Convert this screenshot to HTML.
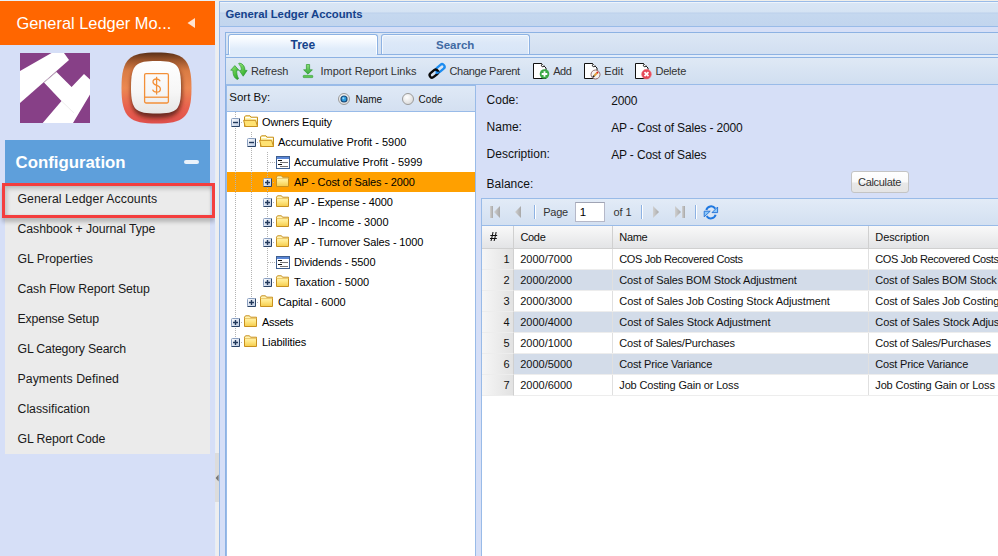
<!DOCTYPE html>
<html><head><meta charset="utf-8">
<style>
*{margin:0;padding:0;box-sizing:border-box}
html,body{width:998px;height:556px;overflow:hidden;background:#D6DFF7;font-family:"Liberation Sans",sans-serif}
body{position:relative}
.a{position:absolute}
.t{position:absolute;white-space:nowrap;line-height:1}
svg{position:absolute;overflow:visible}
</style></head><body>
<div class="a" style="left:0px;top:1px;width:215px;height:44px;background:#FF6600"></div>
<div class="t" style="left:16.4px;top:15.12px;font-size:16.4px;color:#fff">General Ledger Mo...</div>
<svg style="left:0;top:0" width="215" height="45"><path d="M187.5 23 L195 18 L195 28 Z" fill="#FFE3D0"/></svg>
<svg style="left:20px;top:53px" width="70" height="70" viewBox="0 0 70 70">
<rect width="70" height="70" fill="#874087"/>
<path d="M31.5 0 L44 0 L49 7 L0 50 L0 18 Z" fill="#fff"/>
<path d="M36.5 19 L51.6 34 L64 21 L70 26.5 L70 41.5 L53 70 L22.7 70 L41.5 48 L24 29.6 Z" fill="#fff"/>
<path d="M24 29.6 L36.5 19" stroke="#ccc" stroke-width="0.8"/>
<path d="M41.5 48 L54 60" stroke="#e0e0e0" stroke-width="0.6"/>
</svg>
<svg style="left:120px;top:51px" width="73" height="75" viewBox="0 0 73 75">
<defs>
<linearGradient id="og" x1="0" y1="0" x2="0" y2="1">
<stop offset="0" stop-color="#5A3018"/><stop offset="0.1" stop-color="#96522A"/><stop offset="0.26" stop-color="#DA7C44"/><stop offset="0.5" stop-color="#EC8852"/><stop offset="0.78" stop-color="#E8604E"/><stop offset="1" stop-color="#E0504C"/>
</linearGradient>
<linearGradient id="wg" x1="0" y1="0" x2="0" y2="1">
<stop offset="0" stop-color="#FFFFFF"/><stop offset="0.6" stop-color="#F6F6F6"/><stop offset="1" stop-color="#E6E6E6"/>
</linearGradient>
<filter id="sh" x="-30%" y="-30%" width="160%" height="160%"><feGaussianBlur stdDeviation="2"/></filter>
</defs>
<path d="M36.5 1.5 C63 1.5 71.5 7 71.5 37 C71.5 67 63 72.5 36.5 72.5 C10 72.5 1.5 67 1.5 37 C1.5 7 10 1.5 36.5 1.5 Z" fill="url(#og)"/>
<path d="M36.5 13 C57 13 62 17 62 39.5 C62 62 57 67 36.5 67 C16 67 11 62 11 39.5 C11 17 16 13 36.5 13 Z" fill="#3A1208" opacity="0.7" filter="url(#sh)"/>
<path d="M36.5 10 C57 10 61 13 61 36.5 C61 59.5 57 62.5 36.5 62.5 C16 62.5 11 59.5 11 36.5 C11 13 16 10 36.5 10 Z" fill="url(#wg)"/>
<g fill="none" stroke="#F39038" stroke-width="1.3">
<path d="M26 22.6 H47 Q48.4 22.6 48.4 24 V50.6 Q48.4 52 47 52 H26 Q24.6 52 24.6 50.6 V24 Q24.6 22.6 26 22.6 Z"/>
<path d="M24.6 46.2 H48.4"/>
<path d="M40.2 30.2 C39.5 28.6 38.4 28 36.6 28 C34.4 28 33 29.3 33 31 C33 33 34.6 33.7 36.6 34.3 C38.8 35 40.4 35.8 40.4 38 C40.4 40 38.8 41.2 36.6 41.2 C34.6 41.2 33.2 40.4 32.6 38.6"/>
<path d="M36.6 25.8 V43.6"/>
</g>
</svg>
<div class="a" style="left:5px;top:140px;width:205px;height:43px;background:#5E9FDB"></div>
<div class="t" style="left:15.6px;top:154.58px;font-size:16.8px;color:#fff;font-weight:bold">Configuration</div>
<div class="a" style="left:184px;top:160px;width:15px;height:4px;background:#EAF2FB;border-radius:2px"></div>
<div class="a" style="left:5px;top:183px;width:205px;height:271px;background:#EBEBEB"></div>
<div class="a" style="left:2px;top:183px;width:213px;height:35px;border:3px solid #F43E3E;box-shadow:inset 2px 3px 4px rgba(0,0,0,0.18),inset -2px 0 3px rgba(0,0,0,0.08),0 4px 4px rgba(0,0,0,0.22)"></div>
<div class="t" style="left:17.5px;top:193.19px;font-size:12.3px;color:#1a1a1a;letter-spacing:0.04px">General Ledger Accounts</div>
<div class="t" style="left:17.5px;top:223.19px;font-size:12.3px;color:#1a1a1a;letter-spacing:-0.08px">Cashbook + Journal Type</div>
<div class="t" style="left:17.5px;top:253.19px;font-size:12.3px;color:#1a1a1a;letter-spacing:0px">GL Properties</div>
<div class="t" style="left:17.5px;top:283.19px;font-size:12.3px;color:#1a1a1a;letter-spacing:-0.08px">Cash Flow Report Setup</div>
<div class="t" style="left:17.5px;top:313.19px;font-size:12.3px;color:#1a1a1a;letter-spacing:-0.15px">Expense Setup</div>
<div class="t" style="left:17.5px;top:343.19px;font-size:12.3px;color:#1a1a1a;letter-spacing:-0.18px">GL Category Search</div>
<div class="t" style="left:17.5px;top:373.19px;font-size:12.3px;color:#1a1a1a;letter-spacing:0.06px">Payments Defined</div>
<div class="t" style="left:17.5px;top:403.19px;font-size:12.3px;color:#1a1a1a;letter-spacing:0px">Classification</div>
<div class="t" style="left:17.5px;top:433.19px;font-size:12.3px;color:#1a1a1a;letter-spacing:-0.1px">GL Report Code</div>
<div class="a" style="left:215px;top:1px;width:4px;height:555px;background:#EEEEEE"></div>
<div class="a" style="left:215px;top:1px;width:1px;height:555px;background:#E6EEF8"></div>
<div class="a" style="left:215px;top:453px;width:4px;height:49px;background:#DCDCDC"></div>
<svg style="left:215px;top:470px" width="4" height="16"><path d="M0.6 8 L3.6 4.5 L3.6 11.5 Z" fill="#777"/></svg>
<div class="a" style="left:219px;top:1px;width:779px;height:555px;background:#D6DFF7;border-left:1px solid #99BBE8;border-top:1px solid #99BBE8"></div>
<div class="a" style="left:220px;top:2px;width:778px;height:25px;background:linear-gradient(#D9E6F5 0px,#D5E3F3 10px,#BCD0EB 11px,#C5D8EF 12px,#C2D5EE 24px);border-bottom:1px solid #99BBE8"></div>
<div class="a" style="left:220px;top:2px;width:778px;height:1px;background:#EEF4FB"></div>
<div class="t" style="left:225.5px;top:9.03px;font-size:11.3px;color:#15428B;font-weight:bold">General Ledger Accounts</div>
<div class="a" style="left:225px;top:32px;width:773px;height:524px;border-left:1px solid #8DB2E3;border-top:1px solid #8DB2E3;background:#D6DFF7"></div>
<div class="a" style="left:226px;top:33px;width:772px;height:22px;background:linear-gradient(#DCE7F5,#D2DFF1);border-bottom:1px solid #8DB2E3"></div>
<div class="a" style="left:226px;top:55px;width:772px;height:2px;background:#E2EDFB"></div>
<div class="a" style="left:226px;top:57px;width:772px;height:1px;background:#8DB2E3"></div>
<div class="a" style="left:228px;top:34px;width:150px;height:21px;border:1px solid #8DB2E3;border-bottom:none;border-radius:3px 3px 0 0;background:linear-gradient(#FFFFFF 0px,#F3F8FE 6px,#E0ECFA 14px,#DEEBFA 23px);box-shadow:inset 1px 1px 0 #fff,inset -1px 0 0 #fff"></div>
<div class="a" style="left:381px;top:34px;width:149px;height:20px;border:1px solid #8DB2E3;border-bottom:none;border-radius:3px 3px 0 0;background:linear-gradient(#E6EFFA 0px,#DCE8F8 8px,#D7E5F7 20px);box-shadow:inset 1px 1px 0 #F4F8FD,inset -1px 0 0 #F4F8FD"></div>
<div class="a" style="left:229px;top:54px;width:148px;height:1px;background:#DEEBFA"></div>
<div class="t" style="left:290.5px;top:39.34px;font-size:12px;color:#15428B;font-weight:bold">Tree</div>
<div class="t" style="left:436px;top:39.77px;font-size:11.5px;color:#416AA3;font-weight:bold">Search</div>
<div class="a" style="left:226px;top:58px;width:772px;height:27px;background:linear-gradient(#DFE9F5,#D0DEF0);border-bottom:1px solid #99BBE8"></div>
<div class="t" style="left:251px;top:66.49px;font-size:11px;color:#333;letter-spacing:-0.2px">Refresh</div>
<div class="t" style="left:320.5px;top:66.49px;font-size:11px;color:#333">Import Report Links</div>
<div class="t" style="left:449.4px;top:66.49px;font-size:11px;color:#333;letter-spacing:-0.27px">Change Parent</div>
<div class="t" style="left:553.2px;top:66.49px;font-size:11px;color:#333;letter-spacing:-0.4px">Add</div>
<div class="t" style="left:604.3px;top:66.49px;font-size:11px;color:#333">Edit</div>
<div class="t" style="left:655.4px;top:66.49px;font-size:11px;color:#333;letter-spacing:-0.18px">Delete</div>
<svg style="left:230px;top:62px" width="18" height="18" viewBox="0 0 18 18">
<defs><linearGradient id="gr" x1="0" y1="0" x2="1" y2="1"><stop offset="0" stop-color="#9AE67E"/><stop offset="0.6" stop-color="#4EC040"/><stop offset="1" stop-color="#22982A"/></linearGradient></defs>
<path d="M0.7 8.2 L4.8 3.6 L8.9 8.2 H6.7 C6.6 11.5 7.2 14.5 8.6 16.6 L7.6 17.4 C4.4 16.6 2.9 13 2.9 8.2 Z" fill="url(#gr)" stroke="#2C9A30" stroke-width="0.7" stroke-linejoin="round"/>
<path d="M17.1 8.4 L13.2 14.2 L9.3 8.4 H11.4 C11.4 5.4 10.6 3.4 8.6 2 L9.4 1 C13 1.6 15 4.4 15 8.4 Z" fill="url(#gr)" stroke="#2C9A30" stroke-width="0.7" stroke-linejoin="round"/>
</svg>
<svg style="left:302px;top:63px" width="12" height="16" viewBox="0 0 12 16">
<defs><linearGradient id="ig" x1="0" y1="0" x2="0" y2="1"><stop offset="0" stop-color="#8EE07A"/><stop offset="1" stop-color="#34A83A"/></linearGradient></defs>
<path d="M4.4 1.5 H7.6 V6.8 H10.4 L6 11.2 L1.6 6.8 H4.4 Z" fill="url(#ig)" stroke="#2E9A2E" stroke-width="0.7" stroke-linejoin="round"/>
<rect x="1.2" y="12.4" width="9.6" height="2.2" rx="0.6" fill="#5CC850" stroke="#2E9A2E" stroke-width="0.6"/>
</svg>
<svg style="left:427px;top:61px" width="20" height="20" viewBox="0 0 20 20">
<rect x="-4.8" y="-2.5" width="9.6" height="5" rx="2.5" transform="translate(13.3 7.2) rotate(-40)" fill="none" stroke="#1C8CF0" stroke-width="2.3"/>
<rect x="-4.8" y="-2.5" width="9.6" height="5" rx="2.5" transform="translate(6.9 12.6) rotate(-40)" fill="none" stroke="#0A0A0A" stroke-width="2.3"/>
<path d="M8.6 11.4 Q9.6 12.6 11.6 11.2" transform="translate(0.2 0)" stroke="#1C8CF0" stroke-width="2.2" fill="none"/>
</svg>
<svg style="left:532px;top:62px" width="20" height="18" viewBox="0 0 20 18">
<path d="M1.5 1.5 H9.5 L14 6 V16.5 H1.5 Z" fill="#fff" stroke="#111" stroke-width="1"/>
<path d="M9.5 1.5 L14 6" fill="none" stroke="#111" stroke-width="1"/><path d="M10 2.2 C9 3 9.2 4.6 10.6 4.7 C11.6 4.8 12.2 4.2 12.4 3.9" fill="#fff" stroke="#111" stroke-width="1"/>
<circle cx="12.5" cy="12" r="4.8" fill="#3DAA48"/><path d="M12.5 9.2 V14.8 M9.7 12 H15.3" stroke="#fff" stroke-width="1.8"/>
</svg>
<svg style="left:583px;top:62px" width="20" height="18" viewBox="0 0 20 18">
<path d="M1.5 1.5 H9.5 L14 6 V16.5 H1.5 Z" fill="#fff" stroke="#111" stroke-width="1"/>
<path d="M9.5 1.5 L14 6" fill="none" stroke="#111" stroke-width="1"/><path d="M10 2.2 C9 3 9.2 4.6 10.6 4.7 C11.6 4.8 12.2 4.2 12.4 3.9" fill="#fff" stroke="#111" stroke-width="1"/>
<circle cx="12.5" cy="12.5" r="4.5" fill="#f6f2f2" stroke="#8a6060" stroke-width="0.9"/><path d="M11 14 L14.2 10.8" stroke="#E0A040" stroke-width="2"/><path d="M14 11 L15 10" stroke="#E02020" stroke-width="2"/><path d="M9.8 15.2 L11.2 13.8" stroke="#222" stroke-width="1.6"/>
</svg>
<svg style="left:634px;top:62px" width="20" height="18" viewBox="0 0 20 18">
<path d="M1.5 1.5 H9.5 L14 6 V16.5 H1.5 Z" fill="#fff" stroke="#111" stroke-width="1"/>
<path d="M9.5 1.5 L14 6" fill="none" stroke="#111" stroke-width="1"/><path d="M10 2.2 C9 3 9.2 4.6 10.6 4.7 C11.6 4.8 12.2 4.2 12.4 3.9" fill="#fff" stroke="#111" stroke-width="1"/>
<circle cx="12.5" cy="12.2" r="4.9" fill="#E64858" stroke="#F08890" stroke-width="0.6"/><path d="M10.5 10.2 L14.5 14.2 M14.5 10.2 L10.5 14.2" stroke="#fff" stroke-width="1.7"/>
</svg>
<div class="a" style="left:226px;top:85px;width:250px;height:27px;background:linear-gradient(#DFE9F6,#D4E0F1);border-bottom:1px solid #99BBE8;border-right:1px solid #99BBE8;border-left:1px solid #99BBE8;border-top:1px solid #99BBE8"></div>
<div class="t" style="left:229.3px;top:92.27px;font-size:11.5px;color:#111">Sort By:</div>
<svg style="left:338px;top:92.8px" width="12" height="12" viewBox="0 0 12 12"><defs><radialGradient id="rg344" cx="0.4" cy="0.35" r="0.7"><stop offset="0" stop-color="#fff"/><stop offset="1" stop-color="#D8D8D8"/></radialGradient></defs><circle cx="6" cy="6" r="5.5" fill="url(#rg344)" stroke="#9A9A9A" stroke-width="1"/><circle cx="6" cy="6" r="3.6" fill="#1A4A78"/><circle cx="6" cy="6" r="2.4" fill="#2E9BDD"/><circle cx="5.4" cy="5.3" r="1" fill="#9ED8F8"/></svg>
<svg style="left:402px;top:92.8px" width="12" height="12" viewBox="0 0 12 12"><defs><radialGradient id="rg408" cx="0.4" cy="0.35" r="0.7"><stop offset="0" stop-color="#fff"/><stop offset="1" stop-color="#D8D8D8"/></radialGradient></defs><circle cx="6" cy="6" r="5.5" fill="url(#rg408)" stroke="#9A9A9A" stroke-width="1"/></svg>
<div class="t" style="left:355.5px;top:94.83px;font-size:10px;color:#111">Name</div>
<div class="t" style="left:418.6px;top:94.83px;font-size:10px;color:#111">Code</div>
<div class="a" style="left:226px;top:112px;width:250px;height:444px;background:#fff;border-right:1px solid #99BBE8;border-left:1px solid #99BBE8"></div>
<div class="a" style="left:227px;top:172px;width:248px;height:20px;background:#FFA000"></div>
<div class="a" style="left:235px;top:112px;width:1px;height:226px;background:repeating-linear-gradient(#B4B4B4 0 1px,transparent 1px 2px)"></div>
<div class="a" style="left:251px;top:132px;width:1px;height:166px;background:repeating-linear-gradient(#B4B4B4 0 1px,transparent 1px 2px)"></div>
<div class="a" style="left:267px;top:152px;width:1px;height:126px;background:repeating-linear-gradient(#B4B4B4 0 1px,transparent 1px 2px)"></div>
<svg style="left:231px;top:118px" width="9" height="9" viewBox="0 0 9 9"><defs><linearGradient id="eg" x1="0" y1="0" x2="1" y2="1"><stop offset="0" stop-color="#FFFFFF"/><stop offset="1" stop-color="#B9C9E2"/></linearGradient></defs>
<rect x="0.5" y="0.5" width="8" height="8" rx="1" fill="url(#eg)" stroke="#8A9FC0"/><path d="M0.5 8.5 H8.5 V0.5" fill="none" stroke="#2B4468"/><path d="M2 4.5 H7" stroke="#22395C" stroke-width="1.4"/></svg>
<div class="a" style="left:241px;top:122px;width:2px;height:1px;background:repeating-linear-gradient(90deg,#B4B4B4 0 1px,transparent 1px 2px)"></div>
<svg style="left:243px;top:115px" width="16" height="13" viewBox="0 0 16 13">
<path d="M1.5 2 L2.5 0.8 H7 L8 2.2 H14.5 V11.5 H1.5 Z" fill="#FFF6B0" stroke="#C8901E" stroke-width="1"/><path d="M2.5 2.5 H7 M8 3.5 H13.5" stroke="#fff" stroke-width="1"/>
<path d="M0.6 5.3 H12.6 L14.5 11.5 H2.2 Z" fill="#FFE272" stroke="#C8901E" stroke-width="1"/>
</svg>
<div class="t" style="left:262px;top:117.19px;font-size:11px;color:#000;letter-spacing:-0.12px">Owners Equity</div>
<svg style="left:247px;top:138px" width="9" height="9" viewBox="0 0 9 9"><defs><linearGradient id="eg" x1="0" y1="0" x2="1" y2="1"><stop offset="0" stop-color="#FFFFFF"/><stop offset="1" stop-color="#B9C9E2"/></linearGradient></defs>
<rect x="0.5" y="0.5" width="8" height="8" rx="1" fill="url(#eg)" stroke="#8A9FC0"/><path d="M0.5 8.5 H8.5 V0.5" fill="none" stroke="#2B4468"/><path d="M2 4.5 H7" stroke="#22395C" stroke-width="1.4"/></svg>
<div class="a" style="left:257px;top:142px;width:2px;height:1px;background:repeating-linear-gradient(90deg,#B4B4B4 0 1px,transparent 1px 2px)"></div>
<svg style="left:259px;top:135px" width="16" height="13" viewBox="0 0 16 13">
<path d="M1.5 2 L2.5 0.8 H7 L8 2.2 H14.5 V11.5 H1.5 Z" fill="#FFF6B0" stroke="#C8901E" stroke-width="1"/><path d="M2.5 2.5 H7 M8 3.5 H13.5" stroke="#fff" stroke-width="1"/>
<path d="M0.6 5.3 H12.6 L14.5 11.5 H2.2 Z" fill="#FFE272" stroke="#C8901E" stroke-width="1"/>
</svg>
<div class="t" style="left:278px;top:137.19px;font-size:11px;color:#000;letter-spacing:0px">Accumulative Profit - 5900</div>
<div class="a" style="left:268px;top:162px;width:8px;height:1px;background:repeating-linear-gradient(90deg,#B4B4B4 0 1px,transparent 1px 2px)"></div>
<svg style="left:276px;top:156px" width="14" height="13" viewBox="0 0 14 13">
<rect x="0.5" y="0.5" width="13" height="12" fill="#fff" stroke="#3F5F8F"/>
<rect x="1" y="1" width="12" height="2" fill="#5A86D6"/>
<path d="M2 4.5 H6 M2 8.5 H6" stroke="#111" stroke-width="1"/>
<path d="M4 6.5 H12 M4 10.5 H12" stroke="#777" stroke-width="1"/>
</svg>
<div class="t" style="left:294px;top:157.19px;font-size:11px;color:#000;letter-spacing:0px">Accumulative Profit - 5999</div>
<svg style="left:263px;top:178px" width="9" height="9" viewBox="0 0 9 9"><defs><linearGradient id="eg" x1="0" y1="0" x2="1" y2="1"><stop offset="0" stop-color="#FFFFFF"/><stop offset="1" stop-color="#B9C9E2"/></linearGradient></defs>
<rect x="0.5" y="0.5" width="8" height="8" rx="1" fill="url(#eg)" stroke="#8A9FC0"/><path d="M0.5 8.5 H8.5 V0.5" fill="none" stroke="#2B4468"/><path d="M2 4.5 H7 M4.5 2 V7" stroke="#22395C" stroke-width="1.4"/></svg>
<div class="a" style="left:273px;top:182px;width:2px;height:1px;background:repeating-linear-gradient(90deg,#B4B4B4 0 1px,transparent 1px 2px)"></div>
<svg style="left:275px;top:175px" width="16" height="13" viewBox="0 0 16 13"><defs><linearGradient id="fg" x1="0" y1="0" x2="0" y2="1"><stop offset="0" stop-color="#FFF8C4"/><stop offset="0.5" stop-color="#FFE98A"/><stop offset="1" stop-color="#F5CC4A"/></linearGradient></defs>
<path d="M1.5 2.2 L2.5 0.8 H6.5 L7.5 2.2 H13.5 V11.5 H1.5 Z" fill="url(#fg)" stroke="#C8901E" stroke-width="1"/>
<path d="M1.5 3.5 H13.5" stroke="#E8C060" stroke-width="0.8"/>
</svg>
<div class="t" style="left:294px;top:177.19px;font-size:11px;color:#000;letter-spacing:-0.13px">AP - Cost of Sales - 2000</div>
<svg style="left:263px;top:198px" width="9" height="9" viewBox="0 0 9 9"><defs><linearGradient id="eg" x1="0" y1="0" x2="1" y2="1"><stop offset="0" stop-color="#FFFFFF"/><stop offset="1" stop-color="#B9C9E2"/></linearGradient></defs>
<rect x="0.5" y="0.5" width="8" height="8" rx="1" fill="url(#eg)" stroke="#8A9FC0"/><path d="M0.5 8.5 H8.5 V0.5" fill="none" stroke="#2B4468"/><path d="M2 4.5 H7 M4.5 2 V7" stroke="#22395C" stroke-width="1.4"/></svg>
<div class="a" style="left:273px;top:202px;width:2px;height:1px;background:repeating-linear-gradient(90deg,#B4B4B4 0 1px,transparent 1px 2px)"></div>
<svg style="left:275px;top:195px" width="16" height="13" viewBox="0 0 16 13"><defs><linearGradient id="fg" x1="0" y1="0" x2="0" y2="1"><stop offset="0" stop-color="#FFF8C4"/><stop offset="0.5" stop-color="#FFE98A"/><stop offset="1" stop-color="#F5CC4A"/></linearGradient></defs>
<path d="M1.5 2.2 L2.5 0.8 H6.5 L7.5 2.2 H13.5 V11.5 H1.5 Z" fill="url(#fg)" stroke="#C8901E" stroke-width="1"/>
<path d="M1.5 3.5 H13.5" stroke="#E8C060" stroke-width="0.8"/>
</svg>
<div class="t" style="left:294px;top:197.19px;font-size:11px;color:#000;letter-spacing:-0.14px">AP - Expense - 4000</div>
<svg style="left:263px;top:218px" width="9" height="9" viewBox="0 0 9 9"><defs><linearGradient id="eg" x1="0" y1="0" x2="1" y2="1"><stop offset="0" stop-color="#FFFFFF"/><stop offset="1" stop-color="#B9C9E2"/></linearGradient></defs>
<rect x="0.5" y="0.5" width="8" height="8" rx="1" fill="url(#eg)" stroke="#8A9FC0"/><path d="M0.5 8.5 H8.5 V0.5" fill="none" stroke="#2B4468"/><path d="M2 4.5 H7 M4.5 2 V7" stroke="#22395C" stroke-width="1.4"/></svg>
<div class="a" style="left:273px;top:222px;width:2px;height:1px;background:repeating-linear-gradient(90deg,#B4B4B4 0 1px,transparent 1px 2px)"></div>
<svg style="left:275px;top:215px" width="16" height="13" viewBox="0 0 16 13"><defs><linearGradient id="fg" x1="0" y1="0" x2="0" y2="1"><stop offset="0" stop-color="#FFF8C4"/><stop offset="0.5" stop-color="#FFE98A"/><stop offset="1" stop-color="#F5CC4A"/></linearGradient></defs>
<path d="M1.5 2.2 L2.5 0.8 H6.5 L7.5 2.2 H13.5 V11.5 H1.5 Z" fill="url(#fg)" stroke="#C8901E" stroke-width="1"/>
<path d="M1.5 3.5 H13.5" stroke="#E8C060" stroke-width="0.8"/>
</svg>
<div class="t" style="left:294px;top:217.19px;font-size:11px;color:#000;letter-spacing:0px">AP - Income - 3000</div>
<svg style="left:263px;top:238px" width="9" height="9" viewBox="0 0 9 9"><defs><linearGradient id="eg" x1="0" y1="0" x2="1" y2="1"><stop offset="0" stop-color="#FFFFFF"/><stop offset="1" stop-color="#B9C9E2"/></linearGradient></defs>
<rect x="0.5" y="0.5" width="8" height="8" rx="1" fill="url(#eg)" stroke="#8A9FC0"/><path d="M0.5 8.5 H8.5 V0.5" fill="none" stroke="#2B4468"/><path d="M2 4.5 H7 M4.5 2 V7" stroke="#22395C" stroke-width="1.4"/></svg>
<div class="a" style="left:273px;top:242px;width:2px;height:1px;background:repeating-linear-gradient(90deg,#B4B4B4 0 1px,transparent 1px 2px)"></div>
<svg style="left:275px;top:235px" width="16" height="13" viewBox="0 0 16 13"><defs><linearGradient id="fg" x1="0" y1="0" x2="0" y2="1"><stop offset="0" stop-color="#FFF8C4"/><stop offset="0.5" stop-color="#FFE98A"/><stop offset="1" stop-color="#F5CC4A"/></linearGradient></defs>
<path d="M1.5 2.2 L2.5 0.8 H6.5 L7.5 2.2 H13.5 V11.5 H1.5 Z" fill="url(#fg)" stroke="#C8901E" stroke-width="1"/>
<path d="M1.5 3.5 H13.5" stroke="#E8C060" stroke-width="0.8"/>
</svg>
<div class="t" style="left:294px;top:237.19px;font-size:11px;color:#000;letter-spacing:-0.12px">AP - Turnover Sales - 1000</div>
<div class="a" style="left:268px;top:262px;width:8px;height:1px;background:repeating-linear-gradient(90deg,#B4B4B4 0 1px,transparent 1px 2px)"></div>
<svg style="left:276px;top:256px" width="14" height="13" viewBox="0 0 14 13">
<rect x="0.5" y="0.5" width="13" height="12" fill="#fff" stroke="#3F5F8F"/>
<rect x="1" y="1" width="12" height="2" fill="#5A86D6"/>
<path d="M2 4.5 H6 M2 8.5 H6" stroke="#111" stroke-width="1"/>
<path d="M4 6.5 H12 M4 10.5 H12" stroke="#777" stroke-width="1"/>
</svg>
<div class="t" style="left:294px;top:257.19px;font-size:11px;color:#000;letter-spacing:-0.07px">Dividends - 5500</div>
<svg style="left:263px;top:278px" width="9" height="9" viewBox="0 0 9 9"><defs><linearGradient id="eg" x1="0" y1="0" x2="1" y2="1"><stop offset="0" stop-color="#FFFFFF"/><stop offset="1" stop-color="#B9C9E2"/></linearGradient></defs>
<rect x="0.5" y="0.5" width="8" height="8" rx="1" fill="url(#eg)" stroke="#8A9FC0"/><path d="M0.5 8.5 H8.5 V0.5" fill="none" stroke="#2B4468"/><path d="M2 4.5 H7 M4.5 2 V7" stroke="#22395C" stroke-width="1.4"/></svg>
<div class="a" style="left:273px;top:282px;width:2px;height:1px;background:repeating-linear-gradient(90deg,#B4B4B4 0 1px,transparent 1px 2px)"></div>
<svg style="left:275px;top:275px" width="16" height="13" viewBox="0 0 16 13"><defs><linearGradient id="fg" x1="0" y1="0" x2="0" y2="1"><stop offset="0" stop-color="#FFF8C4"/><stop offset="0.5" stop-color="#FFE98A"/><stop offset="1" stop-color="#F5CC4A"/></linearGradient></defs>
<path d="M1.5 2.2 L2.5 0.8 H6.5 L7.5 2.2 H13.5 V11.5 H1.5 Z" fill="url(#fg)" stroke="#C8901E" stroke-width="1"/>
<path d="M1.5 3.5 H13.5" stroke="#E8C060" stroke-width="0.8"/>
</svg>
<div class="t" style="left:294px;top:277.19px;font-size:11px;color:#000;letter-spacing:0px">Taxation - 5000</div>
<svg style="left:247px;top:298px" width="9" height="9" viewBox="0 0 9 9"><defs><linearGradient id="eg" x1="0" y1="0" x2="1" y2="1"><stop offset="0" stop-color="#FFFFFF"/><stop offset="1" stop-color="#B9C9E2"/></linearGradient></defs>
<rect x="0.5" y="0.5" width="8" height="8" rx="1" fill="url(#eg)" stroke="#8A9FC0"/><path d="M0.5 8.5 H8.5 V0.5" fill="none" stroke="#2B4468"/><path d="M2 4.5 H7 M4.5 2 V7" stroke="#22395C" stroke-width="1.4"/></svg>
<div class="a" style="left:257px;top:302px;width:2px;height:1px;background:repeating-linear-gradient(90deg,#B4B4B4 0 1px,transparent 1px 2px)"></div>
<svg style="left:259px;top:295px" width="16" height="13" viewBox="0 0 16 13"><defs><linearGradient id="fg" x1="0" y1="0" x2="0" y2="1"><stop offset="0" stop-color="#FFF8C4"/><stop offset="0.5" stop-color="#FFE98A"/><stop offset="1" stop-color="#F5CC4A"/></linearGradient></defs>
<path d="M1.5 2.2 L2.5 0.8 H6.5 L7.5 2.2 H13.5 V11.5 H1.5 Z" fill="url(#fg)" stroke="#C8901E" stroke-width="1"/>
<path d="M1.5 3.5 H13.5" stroke="#E8C060" stroke-width="0.8"/>
</svg>
<div class="t" style="left:278px;top:297.19px;font-size:11px;color:#000;letter-spacing:-0.07px">Capital - 6000</div>
<svg style="left:231px;top:318px" width="9" height="9" viewBox="0 0 9 9"><defs><linearGradient id="eg" x1="0" y1="0" x2="1" y2="1"><stop offset="0" stop-color="#FFFFFF"/><stop offset="1" stop-color="#B9C9E2"/></linearGradient></defs>
<rect x="0.5" y="0.5" width="8" height="8" rx="1" fill="url(#eg)" stroke="#8A9FC0"/><path d="M0.5 8.5 H8.5 V0.5" fill="none" stroke="#2B4468"/><path d="M2 4.5 H7 M4.5 2 V7" stroke="#22395C" stroke-width="1.4"/></svg>
<div class="a" style="left:241px;top:322px;width:2px;height:1px;background:repeating-linear-gradient(90deg,#B4B4B4 0 1px,transparent 1px 2px)"></div>
<svg style="left:243px;top:315px" width="16" height="13" viewBox="0 0 16 13"><defs><linearGradient id="fg" x1="0" y1="0" x2="0" y2="1"><stop offset="0" stop-color="#FFF8C4"/><stop offset="0.5" stop-color="#FFE98A"/><stop offset="1" stop-color="#F5CC4A"/></linearGradient></defs>
<path d="M1.5 2.2 L2.5 0.8 H6.5 L7.5 2.2 H13.5 V11.5 H1.5 Z" fill="url(#fg)" stroke="#C8901E" stroke-width="1"/>
<path d="M1.5 3.5 H13.5" stroke="#E8C060" stroke-width="0.8"/>
</svg>
<div class="t" style="left:262px;top:317.19px;font-size:11px;color:#000;letter-spacing:-0.28px">Assets</div>
<svg style="left:231px;top:338px" width="9" height="9" viewBox="0 0 9 9"><defs><linearGradient id="eg" x1="0" y1="0" x2="1" y2="1"><stop offset="0" stop-color="#FFFFFF"/><stop offset="1" stop-color="#B9C9E2"/></linearGradient></defs>
<rect x="0.5" y="0.5" width="8" height="8" rx="1" fill="url(#eg)" stroke="#8A9FC0"/><path d="M0.5 8.5 H8.5 V0.5" fill="none" stroke="#2B4468"/><path d="M2 4.5 H7 M4.5 2 V7" stroke="#22395C" stroke-width="1.4"/></svg>
<div class="a" style="left:241px;top:342px;width:2px;height:1px;background:repeating-linear-gradient(90deg,#B4B4B4 0 1px,transparent 1px 2px)"></div>
<svg style="left:243px;top:335px" width="16" height="13" viewBox="0 0 16 13"><defs><linearGradient id="fg" x1="0" y1="0" x2="0" y2="1"><stop offset="0" stop-color="#FFF8C4"/><stop offset="0.5" stop-color="#FFE98A"/><stop offset="1" stop-color="#F5CC4A"/></linearGradient></defs>
<path d="M1.5 2.2 L2.5 0.8 H6.5 L7.5 2.2 H13.5 V11.5 H1.5 Z" fill="url(#fg)" stroke="#C8901E" stroke-width="1"/>
<path d="M1.5 3.5 H13.5" stroke="#E8C060" stroke-width="0.8"/>
</svg>
<div class="t" style="left:262px;top:337.19px;font-size:11px;color:#000;letter-spacing:-0.09px">Liabilities</div>
<div class="t" style="left:486.6px;top:93.84px;font-size:12px;color:#111">Code:</div>
<div class="t" style="left:486.6px;top:120.84px;font-size:12px;color:#111">Name:</div>
<div class="t" style="left:486.6px;top:147.84px;font-size:12px;color:#111">Description:</div>
<div class="t" style="left:486.6px;top:178.34px;font-size:12px;color:#111">Balance:</div>
<div class="t" style="left:611.2px;top:94.74px;font-size:12px;color:#111;letter-spacing:-0.15px">2000</div>
<div class="t" style="left:611.2px;top:121.84px;font-size:12px;color:#111;letter-spacing:-0.15px">AP - Cost of Sales - 2000</div>
<div class="t" style="left:611.2px;top:148.84px;font-size:12px;color:#111;letter-spacing:-0.15px">AP - Cost of Sales</div>
<div class="a" style="left:851px;top:171px;width:58px;height:22px;border:1px solid #C4C4C4;border-radius:3px;background:linear-gradient(#FFFFFF 0,#FAFAFA 10px,#E8E8E8 11px,#E4E4E4 21px)"></div>
<div class="t" style="left:858px;top:177.49px;font-size:11px;color:#333;letter-spacing:-0.3px">Calculate</div>
<div class="a" style="left:481px;top:198px;width:517px;height:358px;background:#fff;border-left:1px solid #99BBE8;border-top:1px solid #99BBE8"></div>
<div class="a" style="left:482px;top:199px;width:516px;height:27px;background:linear-gradient(#E2EBF7,#D3E0F1);border-bottom:1px solid #99BBE8"></div>
<svg style="left:482px;top:199px" width="260" height="26" viewBox="0 0 260 26">
<defs><linearGradient id="pg" x1="0" y1="0" x2="1" y2="0"><stop offset="0" stop-color="#D0D0D0"/><stop offset="1" stop-color="#A8A8A8"/></linearGradient></defs>
<rect x="8" y="7" width="3" height="12" fill="url(#pg)"/>
<path d="M12 13 L18 7 V19 Z" fill="url(#pg)"/>
<path d="M33 13 L39 7 V19 Z" fill="url(#pg)"/>
<rect x="52" y="6" width="1" height="14" fill="#8DB2E3"/><rect x="53" y="6" width="1" height="14" fill="#fff"/>
<rect x="159" y="6" width="1" height="14" fill="#8DB2E3"/><rect x="160" y="6" width="1" height="14" fill="#fff"/>
<path d="M177 13 L171 7 V19 Z" fill="url(#pg)"/>
<path d="M199 13 L193 7 V19 Z" fill="url(#pg)"/>
<rect x="200" y="7" width="3" height="12" fill="url(#pg)"/>
<rect x="213" y="6" width="1" height="14" fill="#8DB2E3"/><rect x="214" y="6" width="1" height="14" fill="#fff"/>
</svg>
<svg style="left:703px;top:204px" width="16" height="16" viewBox="0 0 16 16">
<path d="M3.3 6 C4.3 2.2 9.6 0.8 12.3 4.6" stroke="#1F78E0" stroke-width="2" fill="none"/>
<path d="M14.6 3 V8.6 H9 Z" fill="#8CC8FA" stroke="#1F6FD6" stroke-width="0.9" stroke-linejoin="round"/>
<path d="M12.6 10.8 C11.6 14.6 6.3 16 3.6 12.2" stroke="#1F78E0" stroke-width="2" fill="none"/>
<path d="M1 7 V12.7 H1 L1 12.7 Z" fill="none"/>
<path d="M1.2 7.2 V12.8 L7.2 7.2 Z" fill="#8CC8FA" stroke="#1F6FD6" stroke-width="0.9" stroke-linejoin="round"/>
</svg>
<div class="t" style="left:543.3px;top:207.09px;font-size:11px;color:#333;letter-spacing:-0.3px">Page</div>
<div class="a" style="left:575px;top:202px;width:30px;height:20px;background:#fff;border:1px solid #B5B8C8;border-top-color:#A0A4B4"></div>
<div class="t" style="left:579.8px;top:206.67px;font-size:11.5px;color:#000">1</div>
<div class="t" style="left:613.4px;top:207.09px;font-size:11px;color:#333">of 1</div>
<div class="a" style="left:482px;top:226px;width:516px;height:23px;background:linear-gradient(#F9F9F9,#E3E4E6);border-bottom:1px solid #D0D0D0"></div>
<div class="a" style="left:513px;top:226px;width:1px;height:22px;background:#D0D0D0"></div>
<div class="a" style="left:612px;top:226px;width:1px;height:22px;background:#D0D0D0"></div>
<div class="a" style="left:868px;top:226px;width:1px;height:22px;background:#D0D0D0"></div>
<div class="t" style="left:490px;top:231.12px;font-size:12.5px;color:#111;font-weight:bold;transform:scaleX(1.1)">#</div>
<div class="t" style="left:520.4px;top:232.39px;font-size:11px;color:#111;letter-spacing:-0.3px">Code</div>
<div class="t" style="left:619.3px;top:232.39px;font-size:11px;color:#111;letter-spacing:-0.3px">Name</div>
<div class="t" style="left:875.3px;top:232.39px;font-size:11px;color:#111;letter-spacing:-0.1px">Description</div>
<div class="a" style="left:514px;top:249px;width:484px;height:21px;background:#FFFFFF;border-bottom:1px solid #EDEDED"></div>
<div class="a" style="left:482px;top:249px;width:32px;height:21px;background:linear-gradient(90deg,#F6F6F6,#E2E2E2);border-bottom:1px solid #EDEDED;border-right:1px solid #D0D0D0"></div>
<div class="a" style="left:612px;top:249px;width:1px;height:20px;background:#E0E0E0"></div>
<div class="a" style="left:868px;top:249px;width:1px;height:20px;background:#E0E0E0"></div>
<div class="t" style="right:488.4px;top:253.69px;font-size:11px;color:#111">1</div>
<div class="t" style="left:520.2px;top:253.69px;font-size:11px;color:#111">2000/7000</div>
<div class="t" style="left:619.3px;top:253.69px;font-size:11px;color:#111;letter-spacing:-0.38px">COS Job Recovered Costs</div>
<div class="t" style="left:875.3px;top:253.69px;font-size:11px;color:#111;letter-spacing:-0.38px">COS Job Recovered Costs</div>
<div class="a" style="left:514px;top:270px;width:484px;height:21px;background:#D3DCE9;border-bottom:1px solid #EDEDED"></div>
<div class="a" style="left:482px;top:270px;width:32px;height:21px;background:linear-gradient(90deg,#F6F6F6,#E2E2E2);border-bottom:1px solid #EDEDED;border-right:1px solid #D0D0D0"></div>
<div class="a" style="left:612px;top:270px;width:1px;height:20px;background:#E0E0E0"></div>
<div class="a" style="left:868px;top:270px;width:1px;height:20px;background:#E0E0E0"></div>
<div class="t" style="right:488.4px;top:274.69px;font-size:11px;color:#111">2</div>
<div class="t" style="left:520.2px;top:274.69px;font-size:11px;color:#111">2000/2000</div>
<div class="t" style="left:619.3px;top:274.69px;font-size:11px;color:#111;letter-spacing:-0.12px">Cost of Sales BOM Stock Adjustment</div>
<div class="t" style="left:875.3px;top:274.69px;font-size:11px;color:#111;letter-spacing:-0.12px">Cost of Sales BOM Stock Adjustment</div>
<div class="a" style="left:514px;top:291px;width:484px;height:21px;background:#FFFFFF;border-bottom:1px solid #EDEDED"></div>
<div class="a" style="left:482px;top:291px;width:32px;height:21px;background:linear-gradient(90deg,#F6F6F6,#E2E2E2);border-bottom:1px solid #EDEDED;border-right:1px solid #D0D0D0"></div>
<div class="a" style="left:612px;top:291px;width:1px;height:20px;background:#E0E0E0"></div>
<div class="a" style="left:868px;top:291px;width:1px;height:20px;background:#E0E0E0"></div>
<div class="t" style="right:488.4px;top:295.69px;font-size:11px;color:#111">3</div>
<div class="t" style="left:520.2px;top:295.69px;font-size:11px;color:#111">2000/3000</div>
<div class="t" style="left:619.3px;top:295.69px;font-size:11px;color:#111;letter-spacing:-0.1px">Cost of Sales Job Costing Stock Adjustment</div>
<div class="t" style="left:875.3px;top:295.69px;font-size:11px;color:#111;letter-spacing:-0.1px">Cost of Sales Job Costing Stock Adjustment</div>
<div class="a" style="left:514px;top:312px;width:484px;height:21px;background:#D3DCE9;border-bottom:1px solid #EDEDED"></div>
<div class="a" style="left:482px;top:312px;width:32px;height:21px;background:linear-gradient(90deg,#F6F6F6,#E2E2E2);border-bottom:1px solid #EDEDED;border-right:1px solid #D0D0D0"></div>
<div class="a" style="left:612px;top:312px;width:1px;height:20px;background:#E0E0E0"></div>
<div class="a" style="left:868px;top:312px;width:1px;height:20px;background:#E0E0E0"></div>
<div class="t" style="right:488.4px;top:316.69px;font-size:11px;color:#111">4</div>
<div class="t" style="left:520.2px;top:316.69px;font-size:11px;color:#111">2000/4000</div>
<div class="t" style="left:619.3px;top:316.69px;font-size:11px;color:#111;letter-spacing:-0.08px">Cost of Sales Stock Adjustment</div>
<div class="t" style="left:875.3px;top:316.69px;font-size:11px;color:#111;letter-spacing:-0.08px">Cost of Sales Stock Adjustment</div>
<div class="a" style="left:514px;top:333px;width:484px;height:21px;background:#FFFFFF;border-bottom:1px solid #EDEDED"></div>
<div class="a" style="left:482px;top:333px;width:32px;height:21px;background:linear-gradient(90deg,#F6F6F6,#E2E2E2);border-bottom:1px solid #EDEDED;border-right:1px solid #D0D0D0"></div>
<div class="a" style="left:612px;top:333px;width:1px;height:20px;background:#E0E0E0"></div>
<div class="a" style="left:868px;top:333px;width:1px;height:20px;background:#E0E0E0"></div>
<div class="t" style="right:488.4px;top:337.69px;font-size:11px;color:#111">5</div>
<div class="t" style="left:520.2px;top:337.69px;font-size:11px;color:#111">2000/1000</div>
<div class="t" style="left:619.3px;top:337.69px;font-size:11px;color:#111;letter-spacing:-0.22px">Cost of Sales/Purchases</div>
<div class="t" style="left:875.3px;top:337.69px;font-size:11px;color:#111;letter-spacing:-0.22px">Cost of Sales/Purchases</div>
<div class="a" style="left:514px;top:354px;width:484px;height:21px;background:#D3DCE9;border-bottom:1px solid #EDEDED"></div>
<div class="a" style="left:482px;top:354px;width:32px;height:21px;background:linear-gradient(90deg,#F6F6F6,#E2E2E2);border-bottom:1px solid #EDEDED;border-right:1px solid #D0D0D0"></div>
<div class="a" style="left:612px;top:354px;width:1px;height:20px;background:#E0E0E0"></div>
<div class="a" style="left:868px;top:354px;width:1px;height:20px;background:#E0E0E0"></div>
<div class="t" style="right:488.4px;top:358.69px;font-size:11px;color:#111">6</div>
<div class="t" style="left:520.2px;top:358.69px;font-size:11px;color:#111">2000/5000</div>
<div class="t" style="left:619.3px;top:358.69px;font-size:11px;color:#111;letter-spacing:-0.19px">Cost Price Variance</div>
<div class="t" style="left:875.3px;top:358.69px;font-size:11px;color:#111;letter-spacing:-0.19px">Cost Price Variance</div>
<div class="a" style="left:514px;top:375px;width:484px;height:21px;background:#FFFFFF;border-bottom:1px solid #EDEDED"></div>
<div class="a" style="left:482px;top:375px;width:32px;height:21px;background:linear-gradient(90deg,#F6F6F6,#E2E2E2);border-bottom:1px solid #EDEDED;border-right:1px solid #D0D0D0"></div>
<div class="a" style="left:612px;top:375px;width:1px;height:20px;background:#E0E0E0"></div>
<div class="a" style="left:868px;top:375px;width:1px;height:20px;background:#E0E0E0"></div>
<div class="t" style="right:488.4px;top:379.69px;font-size:11px;color:#111">7</div>
<div class="t" style="left:520.2px;top:379.69px;font-size:11px;color:#111">2000/6000</div>
<div class="t" style="left:619.3px;top:379.69px;font-size:11px;color:#111;letter-spacing:-0.17px">Job Costing Gain or Loss</div>
<div class="t" style="left:875.3px;top:379.69px;font-size:11px;color:#111;letter-spacing:-0.17px">Job Costing Gain or Loss</div>
<div class="a" style="left:0px;top:0px;width:215px;height:1px;background:#E8F2F8"></div>
<div class="a" style="left:215px;top:0px;width:783px;height:1px;background:#F0EFEA"></div>
</body></html>
